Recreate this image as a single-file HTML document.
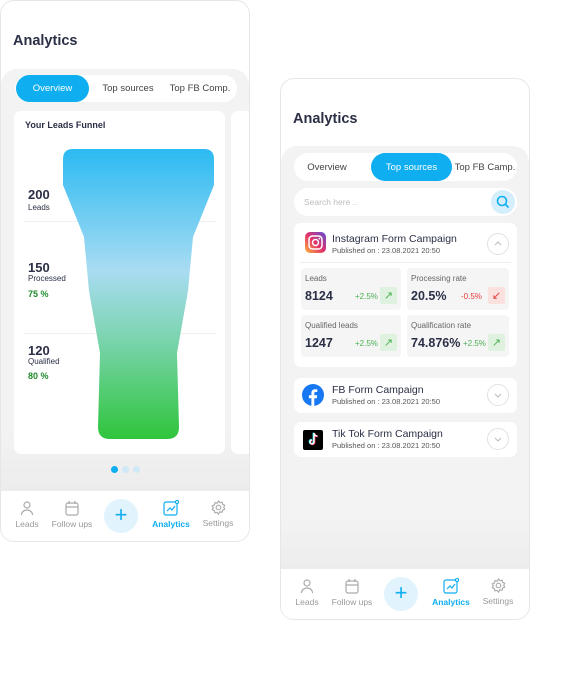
<!DOCTYPE html>
<html><head><meta charset="utf-8"><style>
*{box-sizing:border-box;margin:0;padding:0}
body{width:574px;height:686px;background:#fff;font-family:"Liberation Sans",sans-serif;color:#2b2f45;position:relative;overflow:hidden}
.abs{position:absolute}
.phone{position:absolute;border:1px solid #e6e6ea;border-radius:14px;background:#fff;overflow:hidden}
.gray{position:absolute;left:0;right:0;background:#f3f3f4;border-radius:16px 16px 0 0}
.tabs{position:absolute;background:#fff;border-radius:14px;font-size:9.5px;color:#444;white-space:nowrap}
.tabs span{position:absolute;top:0;height:100%;display:flex;align-items:center;justify-content:center}
.tabs .on{background:#0eaef0;color:#fff;border-radius:14px}
.nav{position:absolute;left:0;right:0;height:51px;background:#fff;font-size:8.5px;color:#999}
.nav .it{position:absolute;top:0;text-align:center;width:50px}
.nav svg{display:block;margin:9px auto 3px}
.plus{position:absolute;width:34px;height:34px;border-radius:50%;background:#e1f3fd;color:#0eaef0;font-size:22px;line-height:32px;text-align:center;top:8px}
.h1{position:absolute;font-size:14.5px;font-weight:bold;color:#2b2f45}
.card{position:absolute;background:#fff;border-radius:7px}
.stat{position:absolute;background:#f5f5f6;border-radius:4px;width:100px;height:42px}
.stat .l{position:absolute;left:4px;top:6px;font-size:8px;color:#666}
.stat .v{position:absolute;left:4px;top:21px;font-size:12.5px;font-weight:bold;color:#2b2f45}
.stat .p{position:absolute;top:24px;font-size:8px}
.stat .b{position:absolute;right:4px;top:19px;width:17px;height:17px;border-radius:2px;display:flex;align-items:center;justify-content:center;font-size:11px}
.g{color:#4caf50}.gb{background:#dff2df;color:#4caf50}
.r{color:#e53935}.rb{background:#fbe0e0;color:#e53935}
.chev{position:absolute;width:22px;height:22px;border:1px solid #e2e2e2;border-radius:50%;right:8px}
.ttl{position:absolute;left:38px;font-size:10.5px;color:#2b2f45}
.sub{position:absolute;left:38px;font-size:7.5px;color:#555}
</style></head><body>

<!-- LEFT PHONE -->
<div class="phone" style="left:0;top:0;width:250px;height:542px">
  <div class="h1" style="left:12px;top:32px">Analytics</div>
  <div class="gray" style="top:68px;height:422px;background:linear-gradient(#f3f3f4 85%,#ececed)"></div>
  <div class="tabs" style="left:14px;top:74px;width:222px;height:27px">
    <span class="on" style="left:1px;width:73px">Overview</span>
    <span style="left:78px;width:70px">Top sources</span>
    <span style="left:148px;width:74px">Top FB Comp.</span>
  </div>
  <div class="card" style="left:13px;top:110px;width:211px;height:343px"></div>
  <div class="card" style="left:230px;top:110px;width:40px;height:343px"></div>
  <div class="abs" style="left:24px;top:119px;font-size:9px;font-weight:bold;color:#2b2f45">Your Leads Funnel</div>
  <div class="abs" style="left:23px;top:220px;width:193px;height:1px;background:#f0f0f0"></div>
  <div class="abs" style="left:23px;top:332px;width:193px;height:1px;background:#f0f0f0"></div>
  <svg class="abs" style="left:0;top:0" width="250" height="460">
    <defs><linearGradient id="fg" gradientUnits="userSpaceOnUse" x1="0" y1="148" x2="0" y2="438">
      <stop offset="0" stop-color="#2bbaf2"/><stop offset="0.42" stop-color="#a9dcf2"/><stop offset="0.65" stop-color="#7cd4b0"/><stop offset="1" stop-color="#2fc53c"/></linearGradient></defs>
    <path d="M72 148 H203 Q213 148 213 158 V184 L192 236 L187 290 L176 352 L178 426 Q178 438 166 438 H109 Q97 438 97 426 L99 352 L88 290 L83 236 L62 184 V158 Q62 148 72 148Z" fill="url(#fg)"/>
  </svg>
  <div class="abs" style="left:27px;top:186px;font-size:13px;font-weight:bold">200</div>
  <div class="abs" style="left:27px;top:202px;font-size:8px">Leads</div>
  <div class="abs" style="left:27px;top:259px;font-size:13px;font-weight:bold">150</div>
  <div class="abs" style="left:27px;top:273px;font-size:8px">Processed</div>
  <div class="abs" style="left:27px;top:288px;font-size:9px;font-weight:bold;color:#1f8a2b">75 %</div>
  <div class="abs" style="left:27px;top:342px;font-size:13px;font-weight:bold">120</div>
  <div class="abs" style="left:27px;top:356px;font-size:8px">Qualified</div>
  <div class="abs" style="left:27px;top:370px;font-size:9px;font-weight:bold;color:#1f8a2b">80 %</div>
  <div class="abs" style="left:110px;top:465px;width:7px;height:7px;border-radius:50%;background:#0eaef0"></div>
  <div class="abs" style="left:121px;top:465px;width:7px;height:7px;border-radius:50%;background:#cfe9f7"></div>
  <div class="abs" style="left:132px;top:465px;width:7px;height:7px;border-radius:50%;background:#cfe9f7"></div>
  <div class="nav" style="top:490px">
    <div class="it" style="left:1px"><svg width="14" height="16" viewBox="0 0 14 16" fill="none" stroke="#aaa" stroke-width="1.2"><circle cx="7" cy="5" r="3"/><path d="M1.5 15c0-3 2.5-5 5.5-5s5.5 2 5.5 5"/></svg>Leads</div>
    <div class="it" style="left:46px"><svg width="14" height="16" viewBox="0 0 14 16" fill="none" stroke="#aaa" stroke-width="1.2"><rect x="1" y="3" width="12" height="12" rx="2"/><path d="M1 7h12M4 1v3M10 1v3"/></svg>Follow ups</div>
    <div class="plus" style="left:103px">+</div>
    <div class="it" style="left:145px;color:#0eaef0;font-weight:bold"><svg width="16" height="16" viewBox="0 0 16 16" fill="none" stroke="#0eaef0" stroke-width="1.2"><rect x="1" y="2" width="13" height="13" rx="2"/><path d="M4 11l3-3 2 2 3-4"/><circle cx="14" cy="2" r="1.6" fill="#fff"/></svg>Analytics</div>
    <div class="it" style="left:192px"><svg width="15" height="15" viewBox="0 0 16 16" fill="none" stroke="#aaa" stroke-width="1.2"><circle cx="8" cy="8" r="2.5"/><path d="M8 1l1.5 1.8 2.3-.5.6 2.3 2.2 1-1 2.1 1 2.1-2.2 1-.6 2.3-2.3-.5L8 15l-1.5-1.8-2.3.5-.6-2.3-2.2-1 1-2.1-1-2.1 2.2-1 .6-2.3 2.3.5z"/></svg>Settings</div>
  </div>
</div>

<!-- RIGHT PHONE -->
<div class="phone" style="left:280px;top:78px;width:250px;height:542px">
  <div class="h1" style="left:12px;top:32px">Analytics</div>
  <div class="gray" style="top:67px;height:423px;background:linear-gradient(#f3f3f4 88%,#ececed)"></div>
  <div class="tabs" style="left:13px;top:74px;width:223px;height:28px">
    <span style="left:0;width:66px">Overview</span>
    <span class="on" style="left:77px;width:81px">Top sources</span>
    <span style="left:160px;width:62px">Top FB Camp.</span>
  </div>
  <div class="tabs" style="left:13px;top:109px;width:223px;height:28px">
    <span style="left:10px;color:#bbb;font-size:8.5px">Search here ..</span>
    <div style="position:absolute;right:2px;top:2px;width:24px;height:24px;border-radius:50%;background:#d5eefb"><svg width="24" height="24" viewBox="0 0 24 24" fill="none" stroke="#0eaef0" stroke-width="1.6"><circle cx="11" cy="11" r="4.5"/><path d="M14.5 14.5l3 3"/></svg></div>
  </div>
  <!-- Instagram card -->
  <div class="card" style="left:13px;top:144px;width:223px;height:144px">
    <svg class="abs" style="left:11px;top:9px" width="21" height="21" viewBox="0 0 21 21"><defs><linearGradient id="ig" x1="0" y1="1" x2="1" y2="0"><stop offset="0" stop-color="#fdb53a"/><stop offset=".5" stop-color="#e1306c"/><stop offset="1" stop-color="#5b4fd6"/></linearGradient></defs><rect width="21" height="21" rx="5" fill="url(#ig)"/><rect x="4" y="4" width="13" height="13" rx="3.5" fill="none" stroke="#fff" stroke-width="1.5"/><circle cx="10.5" cy="10.5" r="3" fill="none" stroke="#fff" stroke-width="1.5"/><circle cx="14.3" cy="6.6" r=".9" fill="#fff"/></svg>
    <div class="ttl" style="top:10px">Instagram Form Campaign</div>
    <div class="sub" style="top:23px">Published on : 23.08.2021 20:50</div>
    <div class="chev" style="top:10px"><svg width="20" height="20" viewBox="0 0 20 20" fill="none" stroke="#bbb"><path d="M7 11l3-3 3 3"/></svg></div>
    <div class="abs" style="left:6px;top:39px;width:211px;height:1px;background:#eee"></div>
    <div class="stat" style="left:7px;top:45px"><div class="l">Leads</div><div class="v">8124</div><div class="p g" style="left:54px">+2.5%</div><div class="b gb">↗</div></div>
    <div class="stat" style="left:113px;top:45px;width:102px"><div class="l">Processing rate</div><div class="v">20.5%</div><div class="p r" style="left:54px">-0.5%</div><div class="b rb">↙</div></div>
    <div class="stat" style="left:7px;top:92px"><div class="l">Qualified leads</div><div class="v">1247</div><div class="p g" style="left:54px">+2.5%</div><div class="b gb">↗</div></div>
    <div class="stat" style="left:113px;top:92px;width:102px"><div class="l">Qualification rate</div><div class="v">74.876%</div><div class="p g" style="left:56px">+2.5%</div><div class="b gb">↗</div></div>
  </div>
  <!-- FB -->
  <div class="card" style="left:13px;top:299px;width:223px;height:35px">
    <svg class="abs" style="left:8px;top:6px" width="22" height="22" viewBox="0 0 22 22"><circle cx="11" cy="11" r="11" fill="#1877f2"/><path d="M12.3 22v-7.8h2.5l.4-3h-2.9V9.4c0-.9.3-1.4 1.5-1.4h1.5V5.3c-.3 0-1.2-.1-2.2-.1-2.2 0-3.7 1.3-3.7 3.8v2.2H6.9v3h2.5V22z" fill="#fff"/></svg>
    <div class="ttl" style="top:6px">FB Form Campaign</div>
    <div class="sub" style="top:19px">Published on : 23.08.2021 20:50</div>
    <div class="chev" style="top:6px"><svg width="20" height="20" viewBox="0 0 20 20" fill="none" stroke="#bbb"><path d="M7 9l3 3 3-3"/></svg></div>
  </div>
  <!-- TikTok -->
  <div class="card" style="left:13px;top:343px;width:223px;height:35px">
    <div class="abs" style="left:9px;top:8px;width:20px;height:20px;background:#000;border-radius:2px"><svg width="20" height="20" viewBox="0 0 20 20"><path d="M11 3v9a2 2 0 1 1-2-2" fill="none" stroke="#25f4ee" stroke-width="1.6" transform="translate(-.6 -.4)"/><path d="M11 3v9a2 2 0 1 1-2-2M11 3c.3 1.8 1.5 3 3.3 3" fill="none" stroke="#fe2c55" stroke-width="1.6" transform="translate(.6 .4)"/><path d="M11 3v9a2 2 0 1 1-2-2M11 3c.3 1.8 1.5 3 3.3 3" fill="none" stroke="#fff" stroke-width="1.4"/></svg></div>
    <div class="ttl" style="top:6px">Tik Tok Form Campaign</div>
    <div class="sub" style="top:19px">Published on : 23.08.2021 20:50</div>
    <div class="chev" style="top:6px"><svg width="20" height="20" viewBox="0 0 20 20" fill="none" stroke="#bbb"><path d="M7 9l3 3 3-3"/></svg></div>
  </div>
  <div class="nav" style="top:490px">
    <div class="it" style="left:1px"><svg width="14" height="16" viewBox="0 0 14 16" fill="none" stroke="#aaa" stroke-width="1.2"><circle cx="7" cy="5" r="3"/><path d="M1.5 15c0-3 2.5-5 5.5-5s5.5 2 5.5 5"/></svg>Leads</div>
    <div class="it" style="left:46px"><svg width="14" height="16" viewBox="0 0 14 16" fill="none" stroke="#aaa" stroke-width="1.2"><rect x="1" y="3" width="12" height="12" rx="2"/><path d="M1 7h12M4 1v3M10 1v3"/></svg>Follow ups</div>
    <div class="plus" style="left:103px">+</div>
    <div class="it" style="left:145px;color:#0eaef0;font-weight:bold"><svg width="16" height="16" viewBox="0 0 16 16" fill="none" stroke="#0eaef0" stroke-width="1.2"><rect x="1" y="2" width="13" height="13" rx="2"/><path d="M4 11l3-3 2 2 3-4"/><circle cx="14" cy="2" r="1.6" fill="#fff"/></svg>Analytics</div>
    <div class="it" style="left:192px"><svg width="15" height="15" viewBox="0 0 16 16" fill="none" stroke="#aaa" stroke-width="1.2"><circle cx="8" cy="8" r="2.5"/><path d="M8 1l1.5 1.8 2.3-.5.6 2.3 2.2 1-1 2.1 1 2.1-2.2 1-.6 2.3-2.3-.5L8 15l-1.5-1.8-2.3.5-.6-2.3-2.2-1 1-2.1-1-2.1 2.2-1 .6-2.3 2.3.5z"/></svg>Settings</div>
  </div>
</div>
</body></html>
